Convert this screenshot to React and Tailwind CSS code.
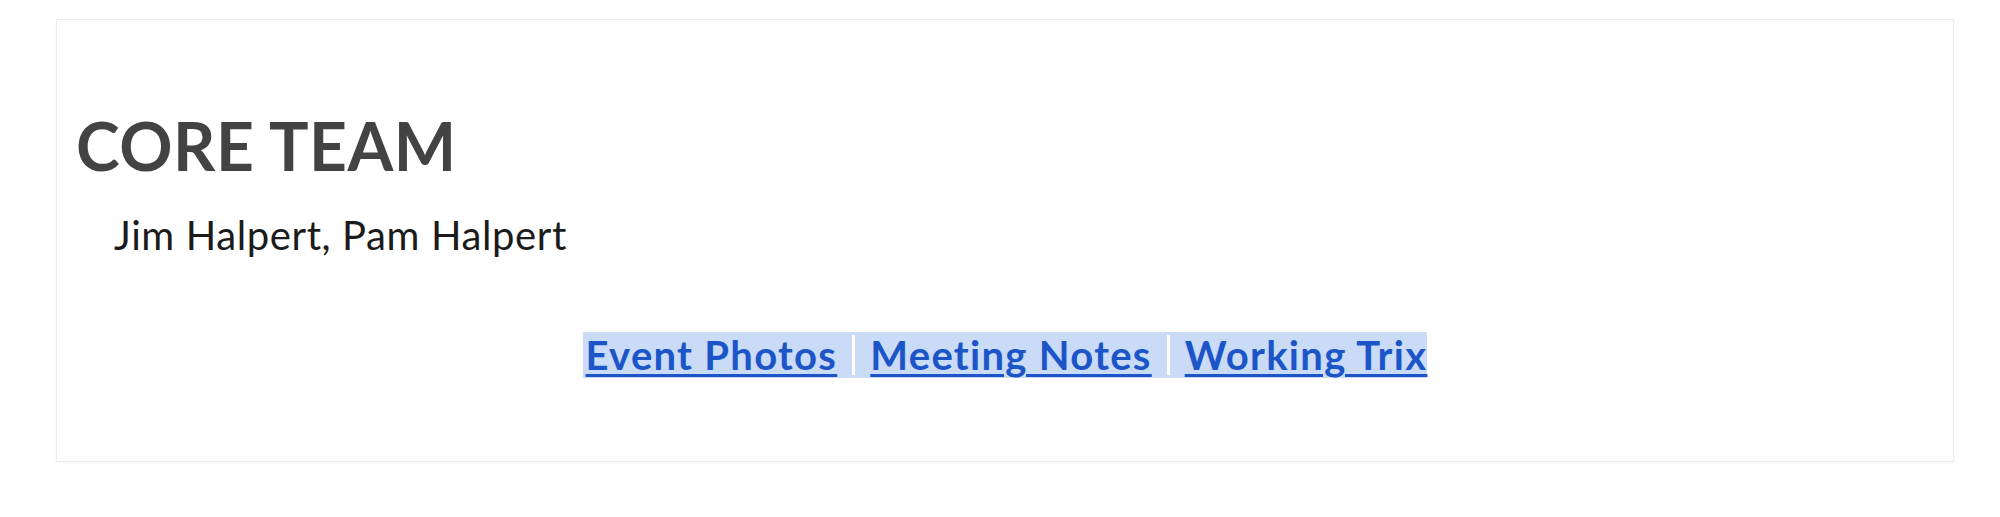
import React from 'react';

const links = ['Event Photos', 'Meeting Notes', 'Working Trix'];

const App = () => {
  return (
    <div className="h-[517px] w-[2000px] bg-white pt-[19px] pl-[56px] pr-[46px]" style={{ fontFamily: 'Lato, "Noto Sans", sans-serif' }}>
      <div className="h-[443px] border border-[#ececec] shadow-[0_1px_2px_rgba(0,0,0,0.04)] pl-[19px]">
        <h1 className="mt-[93px] text-[66px] leading-none font-bold text-[#434343] tracking-[0.5px]">CORE TEAM</h1>
        <p className="mt-[36px] ml-[38px] text-[40px] leading-none text-[#1b1b1b] tracking-[0.6px]">Jim Halpert, Pam Halpert</p>
        <div className="mt-[77px] flex justify-center pr-[19px]">
          <div className="flex h-[46px] items-center bg-[#c9dbf6] pl-[3px]">
            {links.map((label, i) => (
              <React.Fragment key={label}>
                {i > 0 && <span className="mx-[15px] h-[40px] w-[3px] bg-white" />}
                <a href="#" className="text-[40px] leading-none font-bold text-[#1b55c8] tracking-[1.3px] underline decoration-[3px] underline-offset-[4px]">
                  {label}
                </a>
              </React.Fragment>
            ))}
          </div>
        </div>
      </div>
    </div>
  );
};

export default App;
